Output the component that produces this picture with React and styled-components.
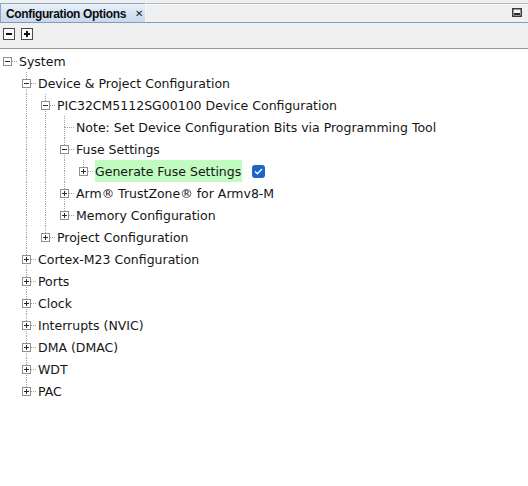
import React from 'react'
import styled, { createGlobalStyle } from 'styled-components'

const GlobalStyle = createGlobalStyle`
  html, body {
    margin: 0;
    padding: 0;
    background: #ffffff;
  }
`

const Panel = styled.div`
  width: 528px;
  height: 486px;
  display: flex;
  flex-direction: column;
  background: #ffffff;
  font-family: 'DejaVu Sans', Verdana, sans-serif;
  overflow: hidden;
`

const TabStrip = styled.div`
  display: flex;
  align-items: stretch;
  height: 19px;
  padding-top: 3px;
  background: #f0f0f0;
  border-bottom: 1px solid #7f9db9;
  box-sizing: content-box;
`

const Tab = styled.div`
  display: flex;
  align-items: center;
  gap: 9px;
  width: 146px;
  box-sizing: border-box;
  padding: 1px 0 0 5px;
  border: 1px solid #8ea6c2;
  border-bottom: none;
  border-right-color: #f4f6f9;
  background: linear-gradient(to bottom, #eaf1f9 0%, #d3e2f2 55%, #c7d9ee 100%);
  font-family: 'Liberation Sans', Arial, sans-serif;
  font-weight: bold;
  font-size: 12px;
  letter-spacing: -0.35px;
  color: #0c0c0c;
  white-space: nowrap;
`

const Close = styled.span`
  font-family: 'DejaVu Sans', sans-serif;
  font-size: 10px;
  font-weight: bold;
  color: #222;
  line-height: 1;
`

const TabFiller = styled.div`
  flex: 1;
  display: flex;
  align-items: flex-start;
  justify-content: flex-end;
  padding: 4px 6px 0 0;
  border-top: 1px solid #a9b9c9;
  box-shadow: inset 0 1px 0 #fafafa;
`

const Toolbar = styled.div`
  display: flex;
  align-items: flex-start;
  gap: 6px;
  height: 26px;
  padding: 5px 0 0 3px;
  box-sizing: border-box;
  background: #f0f0f0;
  border-bottom: 1px solid #969696;
`

const ToolButton = styled.span`
  display: flex;
  width: 12px;
  height: 12px;
`

const Tree = styled.div`
  display: flex;
  flex-direction: column;
  padding-top: 1px;
`

const Row = styled.div`
  display: flex;
  align-items: center;
  height: 22px;
`

const dotV = 'repeating-linear-gradient(to bottom, #a3a3a3 0 1px, transparent 1px 2px)'
const dotH = 'repeating-linear-gradient(to right, #a3a3a3 0 1px, transparent 1px 2px)'

const lines = ({ $up, $down, $right }) => {
  const l = []
  if ($up) l.push(`${dotV} 7px 0 / 1px 11px no-repeat`)
  if ($down) l.push(`${dotV} 7px 11px / 1px 11px no-repeat`)
  if ($right) l.push(`${dotH} 8px 11px / 10px 1px no-repeat`)
  return l.length ? `background: ${l.join(', ')};` : ''
}

const Cell = styled.span`
  flex: none;
  width: 19px;
  height: 22px;
  box-sizing: border-box;
  padding: 7px 0 0 3px;
  ${lines}
`

const Expander = styled.svg`
  display: block;
  width: 9px;
  height: 9px;
`

const Label = styled.span`
  display: flex;
  align-items: center;
  height: 22px;
  padding: 0 1px 0 0;
  font-size: 12.5px;
  color: #151515;
  white-space: nowrap;
  background: ${(p) => (p.$selected ? '#c0fcc0' : 'transparent')};
`

const Check = styled.span`
  display: flex;
  align-items: center;
  justify-content: center;
  width: 13px;
  height: 13px;
  margin-left: 10px;
  border-radius: 3px;
  background: #1b66c6;
`

const tree = {
  label: 'System',
  open: true,
  children: [
    {
      label: 'Device & Project Configuration',
      open: true,
      children: [
        {
          label: 'PIC32CM5112SG00100 Device Configuration',
          open: true,
          children: [
            { label: 'Note: Set Device Configuration Bits via Programming Tool' },
            {
              label: 'Fuse Settings',
              open: true,
              children: [
                { label: 'Generate Fuse Settings', closed: true, selected: true, checkbox: true },
              ],
            },
            { label: 'Arm® TrustZone® for Armv8-M', closed: true },
            { label: 'Memory Configuration', closed: true },
          ],
        },
        { label: 'Project Configuration', closed: true },
      ],
    },
    { label: 'Cortex-M23 Configuration', closed: true },
    { label: 'Ports', closed: true },
    { label: 'Clock', closed: true },
    { label: 'Interrupts (NVIC)', closed: true },
    { label: 'DMA (DMAC)', closed: true },
    { label: 'WDT', closed: true },
    { label: 'PAC', closed: true },
  ],
}

// flatten the tree into rows, keeping which guide columns still continue
const flatten = (node, level = 0, last = true, guides = [], out = []) => {
  out.push({ ...node, level, last, guides })
  if (node.open && node.children) {
    node.children.forEach((child, i) => {
      const isLast = i === node.children.length - 1
      flatten(child, level + 1, isLast, [...guides, level > 0 && !last], out)
    })
  }
  return out
}

const rows = flatten(tree)

const Box = ({ open }) => (
  <Expander viewBox="0 0 9 9">
    <rect x="0.5" y="0.5" width="8" height="8" fill="#fff" stroke="#8f8f8f" />
    <path d="M2 4.5h5" stroke="#2a2a2a" />
    {!open && <path d="M4.5 2v5" stroke="#2a2a2a" />}
  </Expander>
)

const ToolIcon = ({ plus }) => (
  <ToolButton>
    <svg width="12" height="12" viewBox="0 0 12 12">
      <rect x="0.5" y="0.5" width="11" height="11" fill="#fbfbfb" stroke="#4a4a4a" />
      <path d="M3 6h6" stroke="#111" strokeWidth="2" />
      {plus && <path d="M6 3v6" stroke="#111" strokeWidth="2" />}
    </svg>
  </ToolButton>
)

export default function App() {
  return (
    <Panel>
      <GlobalStyle />
      <TabStrip>
        <Tab>
          Configuration Options
          <Close>✕</Close>
        </Tab>
        <TabFiller>
          <svg width="10" height="9" viewBox="0 0 10 9">
            <rect x="0.75" y="0.75" width="8.5" height="7.5" fill="#f4f4f4" stroke="#3c3c3c" strokeWidth="1.5" />
            <rect x="2" y="5" width="6" height="2" fill="#2c2c2c" />
          </svg>
        </TabFiller>
      </TabStrip>
      <Toolbar>
        <ToolIcon />
        <ToolIcon plus />
      </Toolbar>
      <Tree>
        {rows.map((r, i) => (
          <Row key={i}>
            {r.guides.map((g, k) => (
              <Cell key={k} $up={g} $down={g} />
            ))}
            <Cell $up={r.level > 0} $down={r.level > 0 && !r.last} $right>
              {(r.open || r.closed) && <Box open={r.open} />}
            </Cell>
            <Label $selected={r.selected}>{r.label}</Label>
            {r.checkbox && (
              <Check>
                <svg width="9" height="7" viewBox="0 0 9 7">
                  <path d="M1 3.5l2.3 2.3L8 1" fill="none" stroke="#fff" strokeWidth="1.4" />
                </svg>
              </Check>
            )}
          </Row>
        ))}
      </Tree>
    </Panel>
  )
}
